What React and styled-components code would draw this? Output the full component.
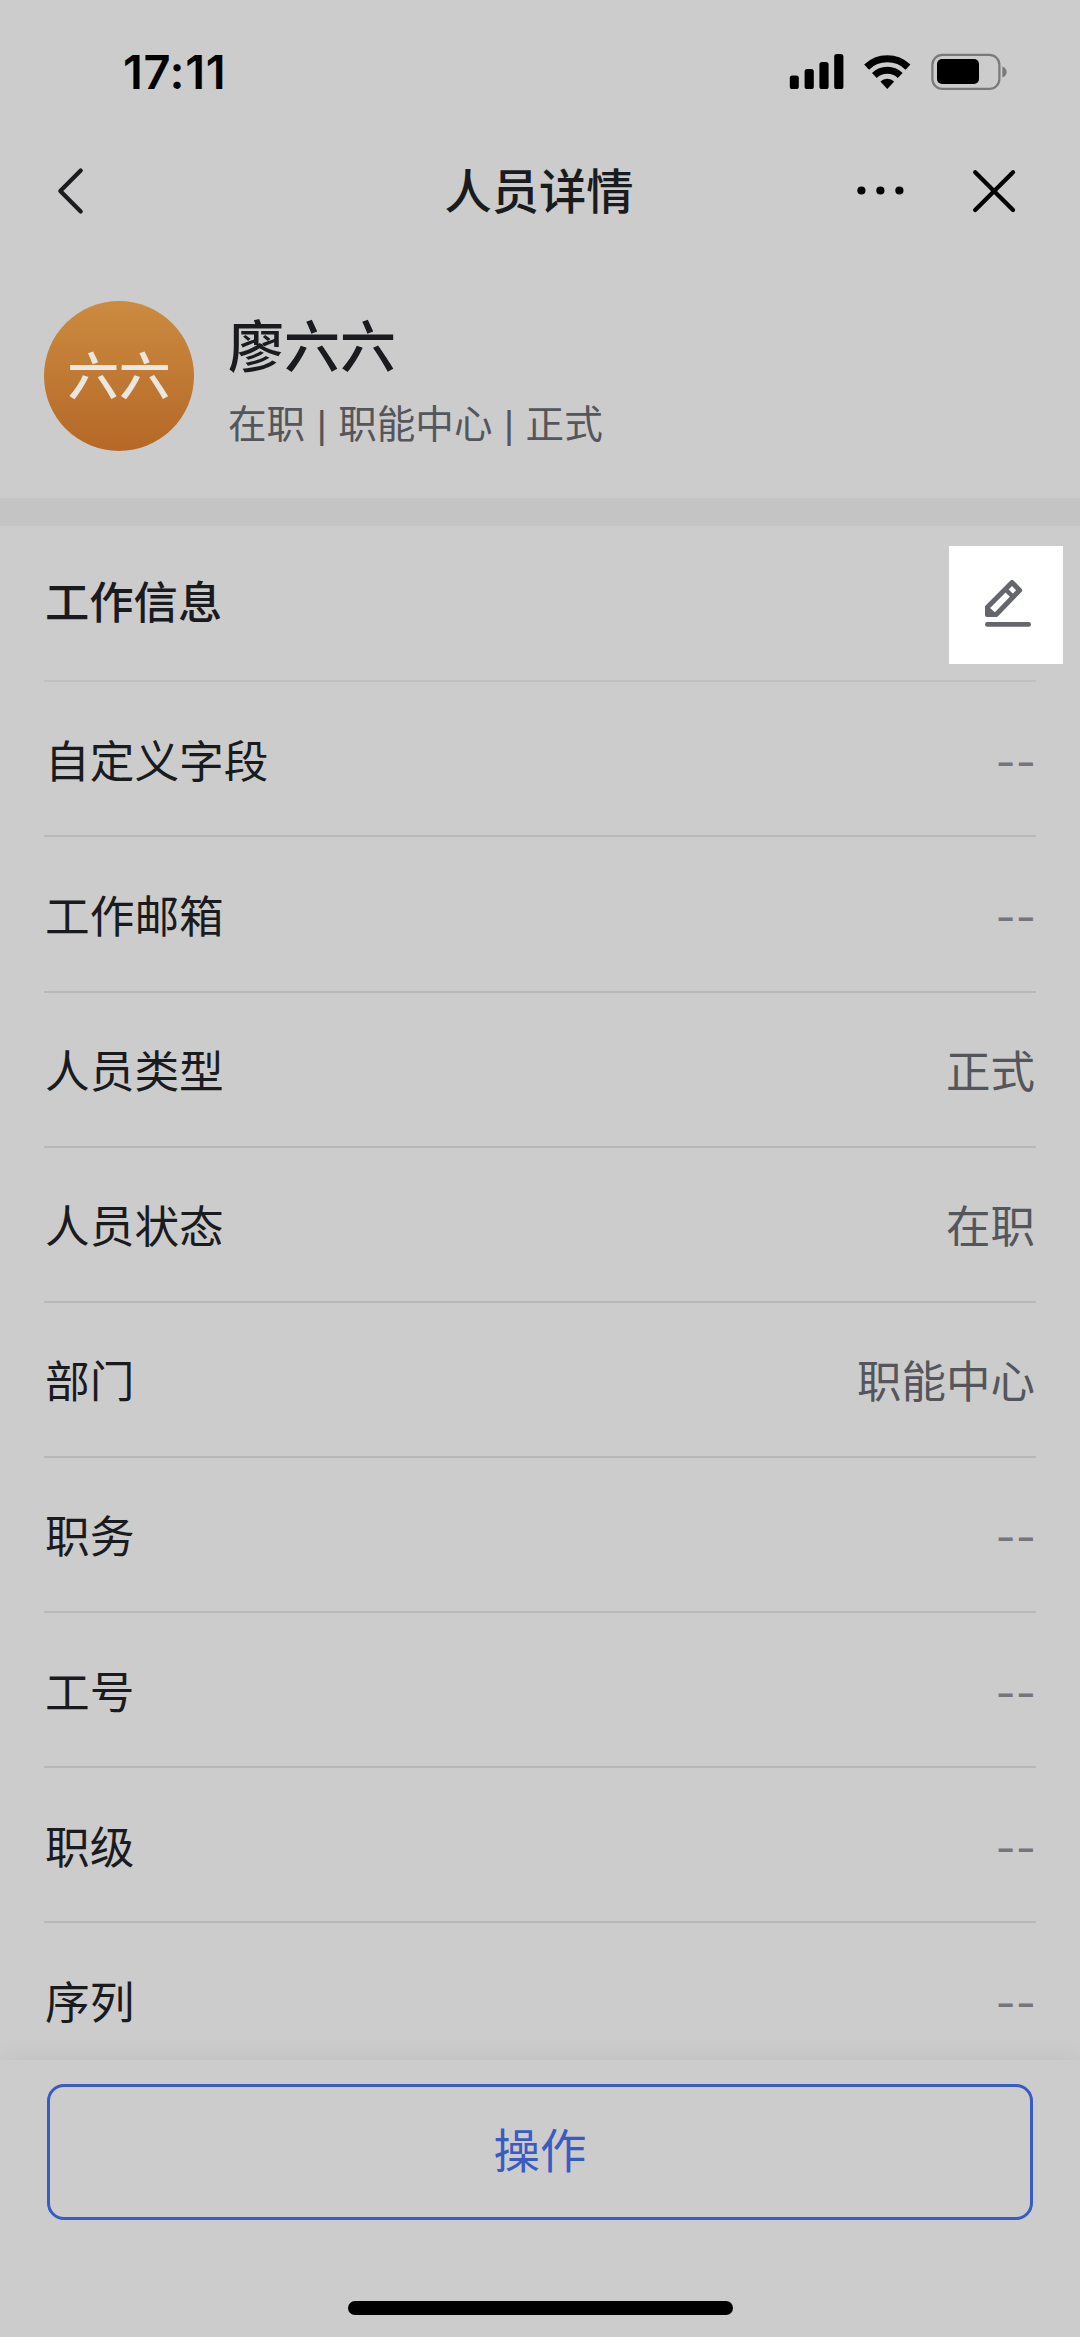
import React from 'react';
import styled, { createGlobalStyle } from 'styled-components';

const GlobalStyle = createGlobalStyle`
  * { box-sizing: border-box; }
  body {
    margin: 0;
    background: #cccccc;
    color: #1a1b1f;
    font-family: "Noto Sans CJK SC", sans-serif;
  }
`;

const Screen = styled.div`
  width: 1080px;
  height: 2337px;
  display: flex;
  flex-direction: column;
  overflow: hidden;
  background: #cccccc;
`;

const StatusBar = styled.div`
  height: 132px;
  flex: none;
  display: flex;
  justify-content: space-between;
  padding: 43px 73px 0 123px;
`;

const Clock = styled.div`
  font: 600 47px/58px Inter, sans-serif;
  letter-spacing: 0.6px;
  color: #000;
`;

const StatusIcons = styled.svg`
  display: block;
  width: 218px;
  height: 38px;
  margin-top: 10px;
`;

const NavBar = styled.header`
  height: 118px;
  flex: none;
  display: grid;
  grid-template-columns: 240px 1fr 240px;
  align-items: center;
`;

const NavSide = styled.div`
  display: flex;
  align-items: center;
  justify-content: ${(p) => (p.$end ? 'flex-end' : 'flex-start')};
  padding: ${(p) => (p.$end ? '0 62px 0 0' : '0 0 0 56px')};
  gap: 66px;
`;

const NavTitle = styled.h1`
  margin: 0;
  padding: 0 2px 5px 0;
  text-align: center;
  font-size: 47.3px;
  line-height: 68px;
  font-weight: 500;
`;

const IconButton = styled.button`
  display: flex;
  padding: 0;
  border: 0;
  background: none;
`;

const Profile = styled.section`
  height: 248px;
  flex: none;
  display: flex;
  align-items: flex-start;
  padding: 51px 44px 0;
  gap: 34px;
`;

const Avatar = styled.div`
  width: 150px;
  height: 150px;
  flex: none;
  border-radius: 50%;
  display: flex;
  align-items: flex-start;
  justify-content: center;
  background: linear-gradient(#cb8b40, #b56827);
  color: #ebe7df;
  font-size: 51.5px;
  font-weight: 500;
  line-height: 144px;
`;

const ProfileText = styled.div`
  display: flex;
  flex-direction: column;
`;

const Name = styled.div`
  font-size: 56px;
  line-height: 80px;
  font-weight: 500;
  margin-top: 2px;
`;

const Summary = styled.div`
  font-family: "Liberation Sans", "Noto Sans CJK SC", sans-serif;
  font-size: 38.6px;
  line-height: 56px;
  word-spacing: 0.8px;
  margin-top: 14px;
  color: #54565c;
`;

const Band = styled.div`
  height: 28px;
  flex: none;
  background: #c4c4c4;
`;

const List = styled.section`
  flex: 1;
  min-height: 0;
  overflow: hidden;
  padding: 0 44px;
`;

const SectionHead = styled.div`
  height: 156.4px;
  display: flex;
  align-items: flex-start;
  justify-content: space-between;
  border-bottom: 2px solid #c0c0c0;
`;

const SectionTitle = styled.h2`
  margin: 41px 0 0 1px;
  font-size: 44.3px;
  line-height: 66px;
  font-weight: 500;
`;

const EditButton = styled.button`
  width: 114px;
  height: 118px;
  margin: 20px -27px 0 0;
  padding: 34px 0 0 36px;
  border: 0;
  background: #fff;
  display: flex;
  align-items: flex-start;
`;

const Row = styled.div`
  height: 155.1px;
  display: flex;
  align-items: center;
  justify-content: space-between;
  padding: 0 2px 0 1px;
  border-bottom: 2px solid #b8b8b9;
`;

const Label = styled.span`
  font-size: 44.7px;
  line-height: 66px;
`;

const Value = styled.span`
  font-size: 44.5px;
  line-height: 66px;
  margin-right: -1px;
  color: #54565c;
`;

const EmptyValue = styled.span`
  font: 400 44px/66px Inter, sans-serif;
  margin-right: -2px;
  padding-top: 6px;
  color: #75757c;
`;

const Footer = styled.footer`
  height: 277px;
  flex: none;
  display: flex;
  flex-direction: column;
  align-items: center;
  justify-content: space-between;
  padding: 24px 47px 22px;
  background: #cccccc;
  box-shadow: 0 0 26px rgba(0, 0, 0, 0.07);
`;

const ActionButton = styled.button`
  width: 100%;
  height: 136px;
  padding: 0 0 8px;
  border: 3px solid #3a5bc4;
  border-radius: 17px;
  background: none;
  color: #3a5bc4;
  font: 400 46.4px/68px "Noto Sans CJK SC", sans-serif;
`;

const HomeIndicator = styled.div`
  width: 385px;
  height: 14px;
  border-radius: 7px;
  background: #000;
`;

const fields = [
  ['自定义字段'],
  ['工作邮箱'],
  ['人员类型', '正式'],
  ['人员状态', '在职'],
  ['部门', '职能中心'],
  ['职务'],
  ['工号'],
  ['职级'],
  ['序列'],
];

const DeviceStatus = () => (
  <StatusIcons viewBox="0 0 218 38">
    <rect x="0.8" y="22.5" width="9" height="13.5" rx="2.6" />
    <rect x="15.6" y="16" width="9.2" height="20" rx="2.6" />
    <rect x="30.4" y="9" width="9.2" height="27" rx="2.6" />
    <rect x="45.2" y="1" width="9.2" height="35" rx="2.6" />
    <g fill="none" stroke="#000" strokeWidth="7">
      <path d="M77.6 14.1A30 30 0 0 1 119 14.1" />
      <path d="M85.4 22.4A18.6 18.6 0 0 1 111.2 22.4" />
    </g>
    <path d="M98.3 36 91.4 28.6A10 10 0 0 1 105.2 28.6Z" />
    <rect x="143.4" y="1.9" width="67" height="34" rx="10" fill="none" stroke="#797979" strokeWidth="2.2" />
    <rect x="148" y="6" width="42" height="25" rx="5" />
    <path d="M213.4 13.5C216.2 14.4 217.6 16.6 217.6 19S216.2 23.6 213.4 24.5Z" fill="#797979" />
  </StatusIcons>
);

const BackIcon = () => (
  <svg width="28" height="48" viewBox="0 0 28 48" fill="none" stroke="#1a1b1f" strokeWidth="4.2" strokeLinecap="round" strokeLinejoin="round">
    <path d="M24.7 3.4 4.3 24 24.7 44.6" />
  </svg>
);

const MoreIcon = () => (
  <svg width="48" height="48" viewBox="0 0 48 48">
    <circle cx="5.4" cy="23.5" r="4.1" />
    <circle cx="24.4" cy="23.5" r="4.1" />
    <circle cx="43.4" cy="23.5" r="4.1" />
  </svg>
);

const CloseIcon = () => (
  <svg width="48" height="48" viewBox="0 0 48 48" stroke="#000" strokeWidth="4.3" strokeLinecap="round">
    <path d="M5.2 5.2 43 43M43 5.2 5.2 43" />
  </svg>
);

const EditIcon = () => (
  <svg width="46" height="47" viewBox="0 0 46 47" fill="none" stroke="#65666b" strokeLinejoin="round" strokeLinecap="round">
    <path d="M27 2.6 34.6 10.2 11.2 34.6H2.4V27.2Z" strokeWidth="5" />
    <path d="M20.4 9.2 28.2 17" strokeWidth="4.4" />
    <path d="M2.4 26.6 11.2 34.6H2.4Z" fill="#65666b" strokeWidth="1.5" />
    <path d="M2.4 44.4H43.6" strokeWidth="4.8" />
  </svg>
);

export default function App() {
  return (
    <>
      <GlobalStyle />
      <Screen>
        <StatusBar>
          <Clock>17:11</Clock>
          <DeviceStatus />
        </StatusBar>
        <NavBar>
          <NavSide>
            <IconButton><BackIcon /></IconButton>
          </NavSide>
          <NavTitle>人员详情</NavTitle>
          <NavSide $end>
            <IconButton><MoreIcon /></IconButton>
            <IconButton><CloseIcon /></IconButton>
          </NavSide>
        </NavBar>
        <Profile>
          <Avatar>六六</Avatar>
          <ProfileText>
            <Name>廖六六</Name>
            <Summary>在职 | 职能中心 | 正式</Summary>
          </ProfileText>
        </Profile>
        <Band />
        <List>
          <SectionHead>
            <SectionTitle>工作信息</SectionTitle>
            <EditButton><EditIcon /></EditButton>
          </SectionHead>
          {fields.map(([label, value]) => (
            <Row key={label}>
              <Label>{label}</Label>
              {value ? <Value>{value}</Value> : <EmptyValue>--</EmptyValue>}
            </Row>
          ))}
        </List>
        <Footer>
          <ActionButton>操作</ActionButton>
          <HomeIndicator />
        </Footer>
      </Screen>
    </>
  );
}
